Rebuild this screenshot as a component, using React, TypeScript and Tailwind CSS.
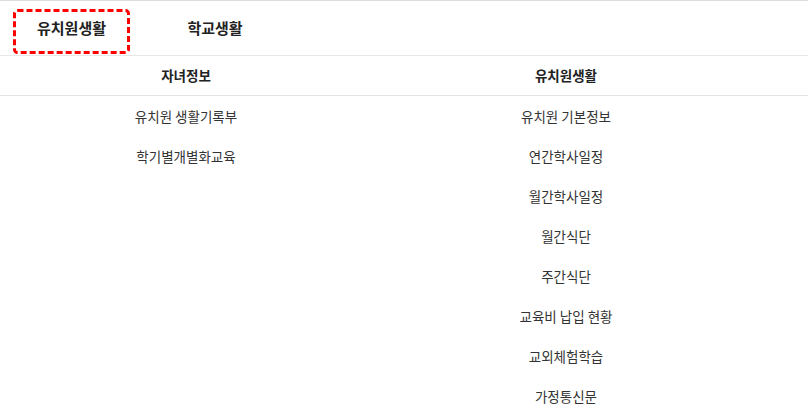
const kids = ["유치원 생활기록부", "학기별개별화교육"];
const school = [
  "유치원 기본정보",
  "연간학사일정",
  "월간학사일정",
  "월간식단",
  "주간식단",
  "교육비 납입 현황",
  "교외체험학습",
  "가정통신문",
];

function Column({ items }: { items: string[] }) {
  return (
    <div className="flex flex-col">
      {items.map((item) => (
        <div key={item} className="h-10 flex items-center justify-center text-[13.5px] text-[#333]">
          {item}
        </div>
      ))}
    </div>
  );
}

export default function App() {
  return (
    <div
      className="w-[808px] h-[409px] overflow-hidden bg-white border-t border-[#dddddd]"
      style={{ fontFamily: '"Noto Sans CJK KR", "Noto Sans", sans-serif' }}
    >
      {/* tabs */}
      <div className="h-[55px] flex items-center border-b border-[#e8e8e8] pl-[13px]">
        <div className="relative w-[117px] h-full flex items-center justify-center text-[15px] font-semibold text-[#222]">
          유치원생활
          <svg className="absolute left-0 top-[8px]" width="117" height="45" viewBox="0 0 117 45">
            <rect
              x="1.5"
              y="1.5"
              width="114"
              height="42"
              rx="3"
              fill="none"
              stroke="#ff0000"
              strokeWidth="3"
              strokeDasharray="6 3"
            />
          </svg>
        </div>
        <div className="w-[170px] h-full flex items-center justify-center text-[15px] font-semibold text-[#222]">
          학교생활
        </div>
      </div>

      {/* table header */}
      <div className="grid grid-cols-[372px_388px] h-10 border-b border-[#e3e3e3]">
        <div className="flex items-center justify-center text-[13.5px] font-bold text-[#222]">자녀정보</div>
        <div className="flex items-center justify-center text-[13.5px] font-bold text-[#222]">유치원생활</div>
      </div>

      <div className="grid grid-cols-[372px_388px]">
        <Column items={kids} />
        <Column items={school} />
      </div>
    </div>
  );
}
